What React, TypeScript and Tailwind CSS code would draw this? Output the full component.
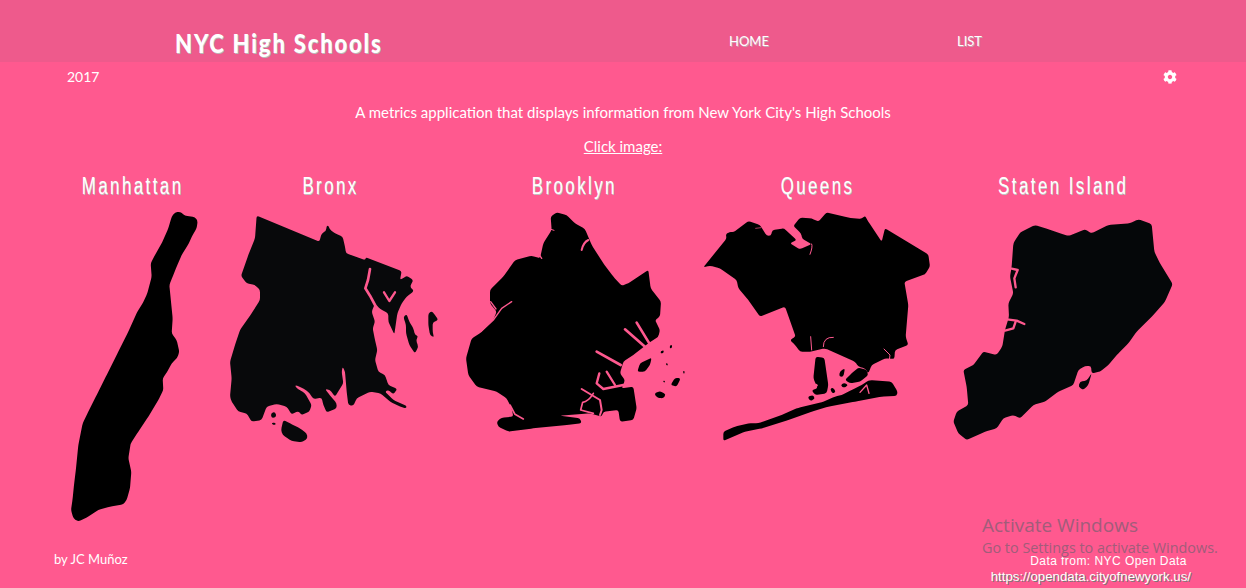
import { FaCog } from "react-icons/fa"

const PINK = "#ff598f"

const boroughs = [
  {
    name: "Manhattan",
    box: "-27 0 492 960",
    fill: "#000000",
    shapes: [
      "M345 22 L360 20 L375 32 L405 36 L413 48 L410 70 L398 90 L385 118 L365 150 L350 185 L338 215 L328 240 L333 290 L338 340 L335 385 L350 405 L358 440 L352 458 L335 475 L322 500 L308 520 L310 555 L295 585 L265 635 L235 680 L212 715 L205 760 L214 800 L210 850 L200 885 L190 898 L150 905 L115 915 L85 935 L55 950 L40 940 L33 915 L38 880 L42 840 L48 790 L55 720 L68 655 L85 620 L110 570 L140 510 L175 440 L205 380 L232 320 L248 295 L262 265 L275 215 L272 175 L285 150 L305 115 L325 70 L335 35 Z",
    ],
    cuts: [],
  },
  {
    name: "Bronx",
    box: "465 0 696 960",
    fill: "#08090b",
    shapes: [
      "M590 32 L778 110 L785 85 L798 78 L800 62 L806 62 L808 72 L825 85 L848 95 L855 125 L858 145 L915 165 L918 157 L1025 198 L1020 225 L1032 218 L1040 212 L1060 225 L1050 245 L1062 258 L1040 275 L1025 295 L1012 325 L1003 388 L985 350 L985 325 L960 312 L945 295 L935 320 L945 350 L938 370 L945 405 L952 435 L945 465 L955 500 L975 510 L985 540 L1012 552 L1000 568 L985 555 L975 560 L1000 585 L1040 603 L1038 610 L1020 605 L990 590 L962 565 L930 560 L890 580 L880 603 L865 600 L860 560 L855 500 L848 485 L845 500 L850 535 L825 575 L810 555 L795 552 L805 565 L830 595 L830 610 L800 622 L790 600 L785 578 L760 582 L745 560 L725 548 L705 540 L708 548 L735 565 L755 600 L748 620 L725 630 L715 618 L695 628 L680 605 L650 597 L620 605 L605 645 L575 650 L560 625 L535 620 L515 590 L510 575 L515 520 L510 470 L525 420 L540 375 L575 325 L600 285 L600 255 L585 240 L560 235 L543 213 L565 150 L585 100 Z",
      "M1030 335 L1040 328 L1048 350 L1060 370 L1065 390 L1075 393 L1068 405 L1075 425 L1065 445 L1048 420 L1038 385 L1038 360 Z",
      "M1105 325 L1115 318 L1125 330 L1135 345 L1118 352 L1118 380 L1122 398 L1110 390 L1105 360 Z",
      "M670 645 L690 655 L720 670 L740 685 L743 700 L725 712 L695 708 L668 690 L663 675 Z",
      "M632 625 L645 620 L650 635 L635 640 Z",
      "M637 652 L648 655 L645 660 L635 658 Z",
    ],
    cuts: [
      { d: "M930 192 L924 225 L916 250 L930 272 L945 300", w: 8 },
      { d: "M972 262 L988 288 L1005 262", w: 7 },
    ],
  },
  {
    name: "Brooklyn",
    box: "-39 0 762 960",
    fill: "#000000",
    shapes: [
      "M272 35 L290 22 L320 30 L345 55 L375 72 L395 120 L430 175 L460 215 L485 242 L505 235 L565 195 L572 250 L603 290 L600 335 L585 345 L600 375 L595 395 L565 415 L520 450 L490 470 L480 505 L495 525 L485 550 L520 545 L530 610 L520 645 L480 650 L475 615 L430 620 L425 635 L390 625 L300 632 L360 640 L365 655 L320 660 L220 670 L145 680 L115 665 L110 650 L125 638 L160 635 L155 610 L140 580 L110 560 L50 545 L25 510 L18 460 L35 400 L60 385 L100 345 L110 320 L90 295 L90 255 L130 215 L165 165 L215 152 L240 160 L250 115 L275 75 Z",
      "M532 500 L540 475 L575 458 L570 480 L555 500 Z",
      "M583 565 L600 558 L618 568 L610 580 L590 578 Z",
      "M632 540 L645 518 L662 520 L650 545 Z",
      "M602 438 L612 436 L610 445 L602 445 Z",
      "M630 420 L637 420 L635 430 L629 430 Z",
      "M668 498 L675 498 L672 508 Z",
      "M616 475 L624 475 L622 484 Z",
      "M608 527 L616 527 L613 534 Z",
    ],
    cuts: [
      { d: "M365 135 Q370 112 385 105", w: 6 },
      { d: "M495 373 L555 425", w: 8 },
      { d: "M530 353 L568 415", w: 8 },
      { d: "M410 440 L482 480", w: 8 },
      { d: "M418 505 L410 535 L430 552 L490 540", w: 7 },
      { d: "M440 500 L465 540", w: 7 },
      { d: "M365 552 L420 585 L425 615 L420 630", w: 6 },
      { d: "M400 565 Q385 590 368 592 L362 615 L400 625", w: 5 },
      { d: "M150 600 L165 628 L190 642", w: 5 },
      { d: "M155 290 L125 310 L100 345 L62 380", w: 4 },
      { d: "M92 290 L108 312", w: 4 },
      { d: "M235 145 L245 160", w: 4 },
      { d: "M270 72 L282 76", w: 3 },
    ],
  },
  {
    name: "Queens",
    box: "18 0 696 960",
    fill: "#000000",
    shapes: [
      "M25 187 L95 100 L92 88 L105 80 L115 82 L160 48 L195 60 L215 92 L228 92 L232 75 L267 70 L305 105 L285 115 L315 133 L350 117 L322 102 L318 85 L295 63 L315 38 L350 40 L370 50 L395 22 L460 38 L500 42 L510 32 L520 50 L560 110 L570 70 L700 148 L705 185 L690 208 L628 230 L640 300 L632 395 L640 420 L600 435 L598 462 L570 460 L530 480 L520 505 L510 490 L490 485 L480 470 L390 430 L345 440 L315 440 L300 420 L285 405 L302 395 L270 305 L195 335 L160 285 L130 250 L125 225 L75 190 L45 182 Z",
      "M362 455 L388 458 L400 540 L395 565 L360 570 L350 555 L368 550 L355 520 Z",
      "M435 498 L450 490 L445 515 L432 515 Z",
      "M470 505 L490 488 L515 495 L520 510 L495 530 L465 535 L450 525 Z",
      "M436 541 L447 533 L460 540 L447 549 Z",
      "M405 552 L413 547 L423 560 L413 566 Z",
      "M338 575 L355 570 L360 582 L345 588 Z",
      "M85 680 L120 665 L160 655 L190 655 L260 630 L310 608 L380 592 L420 575 L440 570 L470 555 L500 540 L515 530 L525 525 L590 530 L608 560 L605 573 L560 575 L480 590 L400 605 L350 620 L280 645 L200 670 L150 680 L85 708 Z",
    ],
    cuts: [
      { d: "M350 117 Q354 125 345 148", w: 3 },
      { d: "M347 395 L350 435", w: 3 },
      { d: "M385 425 Q385 395 415 397", w: 3 },
      { d: "M567 432 L585 450 L583 465", w: 3 },
      { d: "M495 562 L515 540 L522 565", w: 4 },
      { d: "M362 541 L363 541", w: 10 },
      { d: "M182 70 L198 68", w: 2 },
    ],
  },
  {
    name: "Staten Island",
    box: "-36 -15 780 960",
    fill: "#050709",
    shapes: [
      "M225 68 L270 45 L310 58 L345 70 L370 78 L420 58 L440 70 L490 45 L555 40 L580 28 L620 42 L628 125 L645 160 L683 222 L660 275 L625 315 L575 365 L550 400 L520 430 L490 465 L465 485 L440 490 L438 468 L420 468 L400 480 L385 525 L340 545 L300 575 L265 585 L225 625 L205 615 L175 625 L155 655 L120 665 L65 690 L40 670 L25 635 L35 605 L70 585 L65 530 L55 480 L85 465 L115 425 L155 435 L172 410 L180 360 L192 320 L190 280 L205 250 L195 200 L200 170 L205 100 Z",
      "M440 490 L430 525 L415 540 L400 530 L405 515 L425 512 Z",
    ],
    cuts: [
      { d: "M200 176 L218 180 L208 205 L212 232", w: 7 },
      { d: "M186 328 L215 332 L238 342", w: 7 },
      { d: "M212 335 L205 355 L180 362", w: 7 },
    ],
  },
]

// softens the corners of a traced outline, the maps are not polygons
function soften(d: string, r = 7) {
  const pts = d.match(/-?\d+(\.\d+)?\s-?\d+(\.\d+)?/g)!.map((p) => p.split(" ").map(Number))
  const n = pts.length
  let out = ""
  pts.forEach((p, i) => {
    const a = pts[(i - 1 + n) % n]
    const b = pts[(i + 1) % n]
    const la = Math.hypot(a[0] - p[0], a[1] - p[1])
    const lb = Math.hypot(b[0] - p[0], b[1] - p[1])
    const ta = Math.min(r, la / 2) / la
    const tb = Math.min(r, lb / 2) / lb
    const start = [p[0] + (a[0] - p[0]) * ta, p[1] + (a[1] - p[1]) * ta]
    const end = [p[0] + (b[0] - p[0]) * tb, p[1] + (b[1] - p[1]) * tb]
    out += `${i === 0 ? "M" : "L"}${start[0]} ${start[1]} Q${p[0]} ${p[1]} ${end[0]} ${end[1]} `
  })
  return out + "Z"
}

function BoroughMap({ box, fill, shapes, cuts }: { box: string; fill: string; shapes: string[]; cuts: { d: string; w: number }[] }) {
  return (
    <svg viewBox={box} className="block w-full h-[320px]">
      {shapes.map((d, i) => (
        <path key={i} d={soften(d)} fill={fill} />
      ))}
      {cuts.map((c, i) => (
        <path key={i} d={c.d} fill="none" stroke={PINK} strokeWidth={c.w} strokeLinecap="round" strokeLinejoin="round" />
      ))}
    </svg>
  )
}

export default function App() {
  return (
    <div className="relative h-[588px] w-[1246px] overflow-hidden bg-[#ff598f] text-white font-['Lato',sans-serif]">
      {/* Header */}
      <div className="flex h-[62px] items-center bg-[#ee5a8c] pt-[22px]">
        <div className="w-[729px] pl-[175px]">
          <div className="origin-left scale-x-[0.85] whitespace-nowrap pt-[2px] text-[26px] leading-[36px] font-black tracking-[2.1px] [text-shadow:1px_1px_0_#b9b9b9]">
            NYC High Schools
          </div>
        </div>
        <div className="w-[228px] text-[13px] [text-shadow:1px_1px_0_#c9a0b0]">HOME</div>
        <div className="text-[13px] [text-shadow:1px_1px_0_#c9a0b0]">LIST</div>
      </div>

      {/* Year + settings */}
      <div className="flex h-[30px] items-center justify-between pl-[67px] pr-[69px] text-sm">
        <span>2017</span>
        <FaCog className="text-[14px]" />
      </div>

      {/* Intro */}
      <p className="mt-[11px] text-center text-[15px] leading-[18px]">
        A metrics application that displays information from New York City's High Schools
      </p>
      <p className="mt-[16px] text-center text-[15px] leading-[18px] underline">Click image:</p>

      {/* Maps */}
      <div className="ml-[51px] mt-[15px] grid grid-cols-[164px_232px_254px_232px_260px]">
        {boroughs.map((b) => (
          <div key={b.name} className="flex flex-col items-center">
            <div className="h-[35px] scale-x-[0.73] whitespace-nowrap pt-[2px] text-[23px] leading-[28px] tracking-[3.4px] font-['Liberation_Sans',sans-serif] [text-shadow:1px_1px_0_#c0c0c0]">
              {b.name}
            </div>
            <BoroughMap box={b.box} fill={b.fill} shapes={b.shapes} cuts={b.cuts} />
          </div>
        ))}
      </div>

      {/* Footer */}
      <div className="absolute inset-x-0 bottom-0 flex h-[36px] items-start justify-between pl-[54px] pr-[55px]">
        <span className="mt-[-2px] text-[13px] leading-[18px]">by JC Muñoz</span>
        <div className="mt-[1px] flex flex-col items-end text-[12px] leading-[16px] font-['Liberation_Sans',sans-serif]">
          <span className="mr-[4px] tracking-[0.45px]">Data from: NYC Open Data</span>
          <span className="text-[13.25px] [text-shadow:1px_1px_0_#777]">https://opendata.cityofnewyork.us/</span>
        </div>
      </div>

      {/* Activate Windows watermark */}
      <div className="absolute left-[982px] top-[512px] font-['Open_Sans',sans-serif] text-[#a15d7a]">
        <div className="text-[19px] leading-[26px]">Activate Windows</div>
        <div className="text-[14.4px] leading-[20px]">Go to Settings to activate Windows.</div>
      </div>
    </div>
  )
}
